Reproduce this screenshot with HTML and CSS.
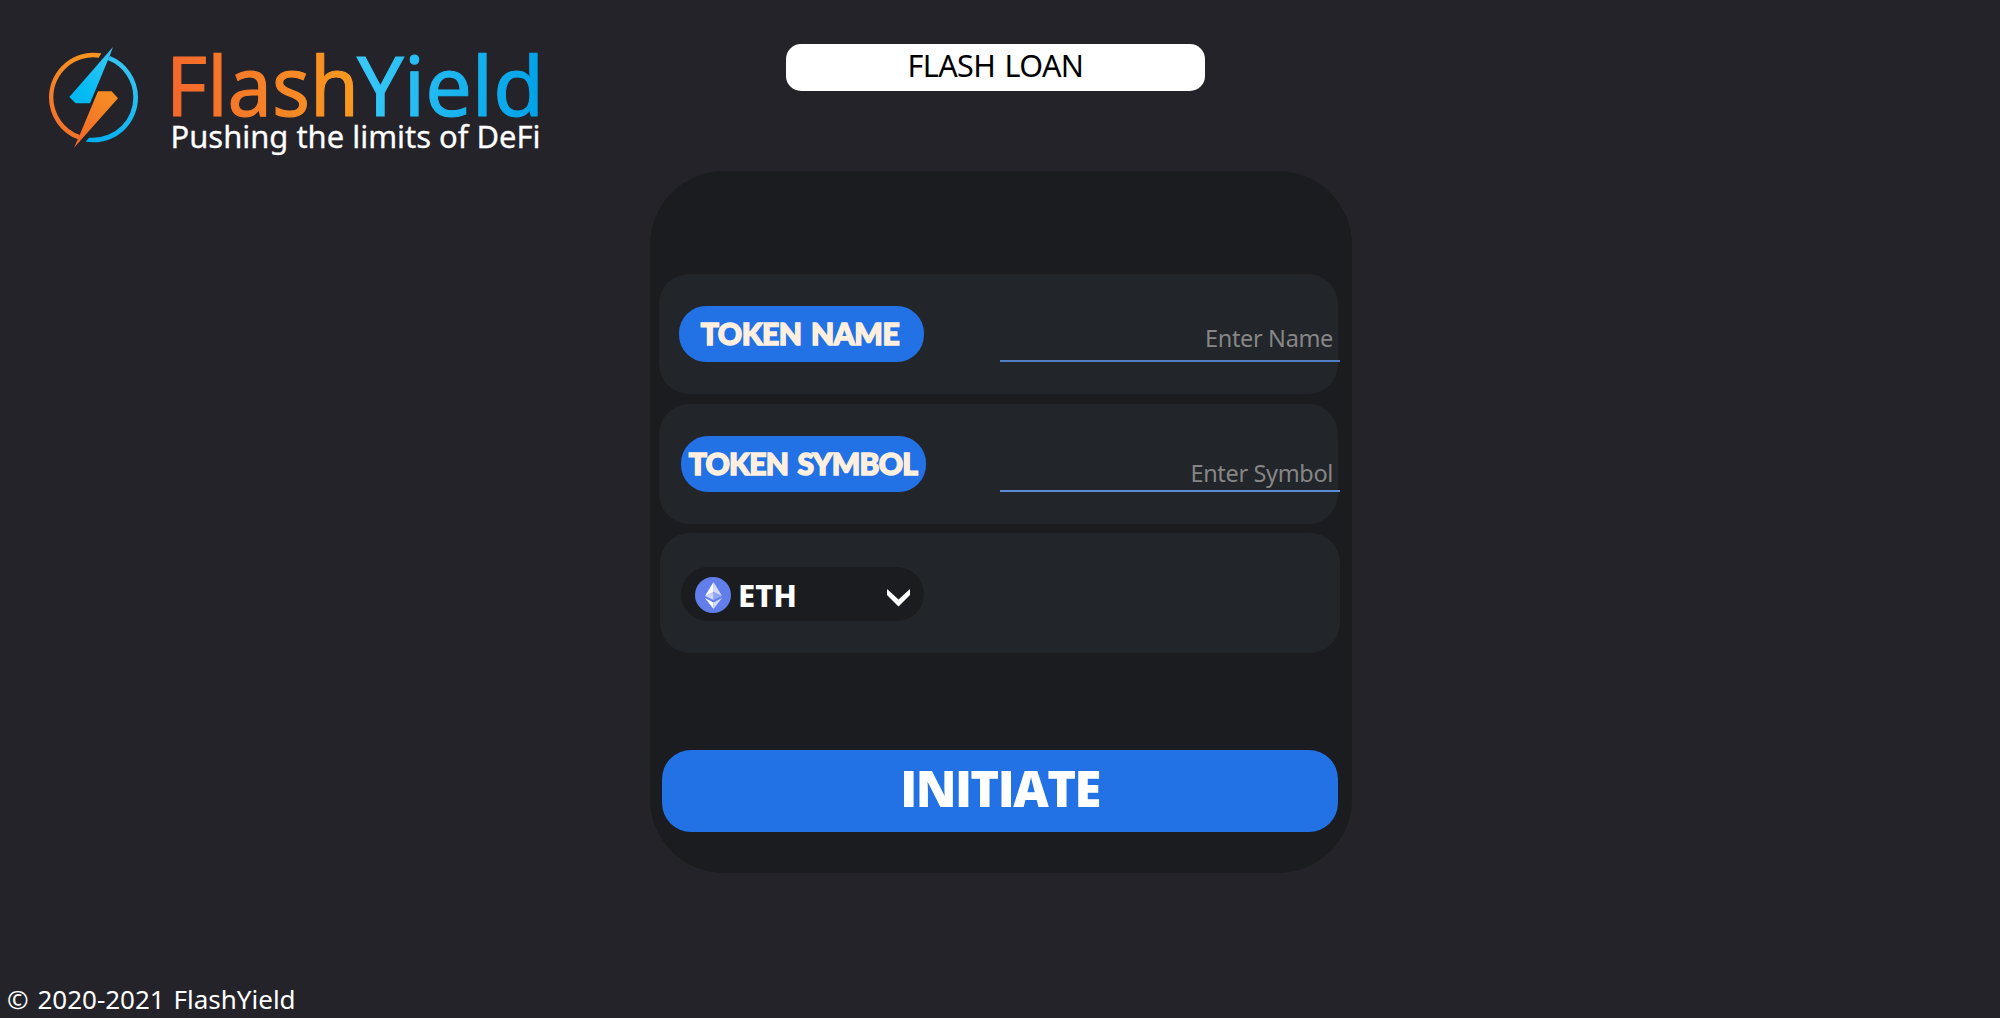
FILE: index.html
```html
<!DOCTYPE html>
<html lang="en">
<head>
<meta charset="utf-8">
<title>FlashYield</title>
<link rel="stylesheet" href="styles.css">
</head>
<body>
<header class="header">
  <div class="brand">
    <svg class="brand-mark" viewBox="0 0 390 390" aria-hidden="true">
      <defs>
        <linearGradient id="warm" x1="0" y1="1" x2="0.5" y2="0"><stop offset="0" stop-color="#f26a2c"/><stop offset="1" stop-color="#f79421"/></linearGradient>
        <linearGradient id="cool" x1="0" y1="1" x2="0.3" y2="0"><stop offset="0" stop-color="#00aeef"/><stop offset="1" stop-color="#33c4f5"/></linearGradient>
        <linearGradient id="boltCool" x1="0" y1="1" x2="1" y2="0"><stop offset="0.2" stop-color="#00b9f2"/><stop offset="1" stop-color="#3cc8f5"/></linearGradient>
        <linearGradient id="boltWarm" x1="0" y1="1" x2="0.6" y2="0"><stop offset="0" stop-color="#f26529"/><stop offset="1" stop-color="#f68b24"/></linearGradient>
      </defs>
      <path fill="url(#warm)" d="M214 70 A134 134 0 0 0 57 202 A134 134 0 0 0 144 328 L150 315 A120 120 0 0 1 70 202 A120 120 0 0 1 206 83 Z"/>
      <path fill="url(#cool)" d="M240 78 A134 134 0 0 1 324 202 A134 134 0 0 1 190 337 L167 335 L177 323 L190 323 A120 120 0 0 0 310 202 A120 120 0 0 0 233 90 Z"/>
      <path fill="url(#boltCool)" d="M249 51 L238 80 L180 220 H137 L118 201 Z"/>
      <path fill="url(#boltWarm)" d="M132 353 L149 315 L204 184 H245 L264 205 Z"/>
    </svg>
    <svg class="wordmark" viewBox="0 0 380 120" role="img" aria-label="FlashYield, Pushing the limits of DeFi">
      <defs>
        <linearGradient id="flash" gradientUnits="userSpaceOnUse" x1="3" y1="60" x2="186" y2="40"><stop offset="0" stop-color="#f4682c"/><stop offset="1" stop-color="#f99a20"/></linearGradient>
        <linearGradient id="yield" gradientUnits="userSpaceOnUse" x1="188" y1="40" x2="370" y2="60"><stop offset="0" stop-color="#38c9f8"/><stop offset="1" stop-color="#00a2e8"/></linearGradient>
      </defs>
      <text class="word" x="-4" y="76" textLength="193" lengthAdjust="spacingAndGlyphs" fill="url(#flash)" stroke="url(#flash)">Flash</text>
      <text class="word" x="187" y="76" textLength="187" lengthAdjust="spacingAndGlyphs" fill="url(#yield)" stroke="url(#yield)">Yield</text>
      <text class="tagline" x="0.5" y="108" textLength="370" lengthAdjust="spacingAndGlyphs">Pushing the limits of DeFi</text>
    </svg>
  </div>
  <div class="page-title"><span>FLASH LOAN</span></div>
</header>
<main class="panel">
  <div class="row">
    <div class="pill"><span class="name-text">TOKEN NAME</span></div>
    <input class="field" type="text" placeholder="Enter Name">
  </div>
  <div class="row row-symbol">
    <div class="pill pill-symbol"><span class="symbol-text">TOKEN SYMBOL</span></div>
    <input class="field field-symbol" type="text" placeholder="Enter Symbol">
  </div>
  <div class="row row-currency">
    <div class="select">
      <svg class="coin" viewBox="0 0 36 36" aria-hidden="true">
        <circle cx="18" cy="18" r="18" fill="#627eea"/>
        <path fill="#fff" d="M18.5 5 L10 19 L18.5 15Z"/><path fill="#d3dafa" d="M18.5 5 V15 L27 19Z"/>
        <path fill="#cdd6f9" d="M10 19 L18.5 15 V23Z"/><path fill="#92a5f1" d="M18.5 15 L27 19 L18.5 23Z"/>
        <path fill="#fff" d="M10 21 L18.5 25.5 V32Z"/><path fill="#d3dafa" d="M27 21 L18.5 25.5 V32Z"/>
      </svg>
      <span class="coin-name">ETH</span>
      <svg class="chevron" viewBox="0 0 23 18" aria-hidden="true"><path fill="#fff" d="M0 0 L11.5 10.5 L23 0 V6 L11.5 17.5 L0 6Z"/></svg>
    </div>
  </div>
  <button class="initiate" type="button"><span>INITIATE</span></button>
</main>
<footer class="footer"><span>© 2020-2021 FlashYield</span></footer>
</body>
</html>
```
FILE: styles.css
```css
* { box-sizing: border-box; }
body {
  margin: 0;
  width: 2000px;
  height: 1018px;
  overflow: hidden;
  display: flex;
  flex-direction: column;
  background: #242329;
  color: #fff;
  font-family: "Noto Sans", "Open Sans", sans-serif;
}
span { display: block; white-space: nowrap; line-height: 1; }
.header {
  height: 171px;
  display: flex;
  align-items: flex-start;
}
.brand {
  width: 786px;
  padding: 30px 0 0 30px;
  display: flex;
  gap: 10px;
}
.brand-mark { width: 130px; height: 130px; }
.wordmark { width: 380px; height: 120px; margin-top: 10px; overflow: visible; }
.word { font-size: 83px; stroke-width: 1.1px; }
.tagline { font-size: 31px; fill: #fff; stroke: #fff; stroke-width: 0.3px; }
.page-title {
  width: 419px;
  height: 47px;
  margin-top: 44px;
  padding-bottom: 4px;
  border-radius: 15px;
  background: #fff;
  color: #000;
  font-size: 30.5px;
  letter-spacing: -0.6px;
  word-spacing: 2px;
  display: flex;
  justify-content: center;
  align-items: center;
}
.panel {
  width: 702px;
  height: 702px;
  margin-left: 650px;
  padding: 103px 0 0 9px;
  border-radius: 74px;
  background: #1b1c1f;
}
.row {
  width: 679px;
  height: 120px;
  padding-left: 20px;
  border-radius: 30px;
  background: #222529;
  display: flex;
  align-items: flex-start;
}
.row-symbol { margin-top: 10px; }
.row-currency { margin: 9px 0 0 1px; width: 680px; }
.pill {
  flex: none;
  width: 245px;
  height: 56px;
  margin-top: 32px;
  padding: 0 3px 2px 0;
  border-radius: 27px;
  background: #2272e6;
  color: #ffefde;
  font: 900 30px Lato, sans-serif;
  letter-spacing: -0.5px;
  word-spacing: 3px;
  -webkit-text-stroke: 1.5px #ffefde;
  display: flex;
  justify-content: center;
  align-items: center;
}
.pill-symbol { margin-left: 2px; padding-right: 1px; letter-spacing: -0.75px; }
.field {
  flex: none;
  width: 340px;
  height: 49px;
  margin: 39px 0 0 76px;
  padding: 2px 7px 0 0;
  border: 0;
  border-bottom: 2px solid #537fc4;
  outline: 0;
  background: none;
  color: #fff;
  font: 23.5px "Noto Sans", sans-serif;
  letter-spacing: -0.35px;
  text-align: right;
}
.field-symbol { margin-left: 74px; padding-top: 13px; border-color: #5c8bd8; }
.field::placeholder { color: #868686; opacity: 1; }
.select {
  width: 243px;
  height: 54px;
  margin: 34px 0 0 1px;
  padding: 0 14px;
  border-radius: 27px;
  background: #1b1c1f;
  display: flex;
  align-items: center;
}
.coin { width: 36px; height: 36px; margin-top: 2px; }
.coin-name { margin: 3px 0 0 7px; font-size: 31px; font-weight: 800; }
.chevron { width: 23px; height: 18px; margin: 7px 0 0 auto; }
.initiate {
  display: flex;
  justify-content: center;
  align-items: center;
  width: 676px;
  height: 82px;
  margin: 97px 0 0 3px;
  padding: 0 0 5px;
  border: 0;
  border-radius: 29px;
  background: #2272e6;
  color: #fff;
  font: 800 49px "Open Sans", sans-serif;
  letter-spacing: -1.6px;
}
.footer { margin-top: auto; padding: 0 0 6px 7px; font-size: 26px; word-spacing: 2px; }
```
